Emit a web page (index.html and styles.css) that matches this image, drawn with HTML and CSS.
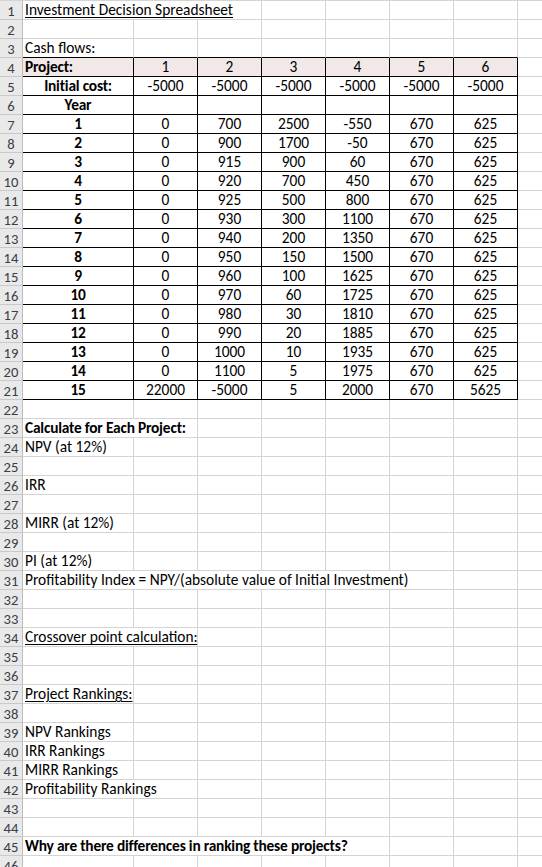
FILE: index.html
```html
<!DOCTYPE html>
<html lang="en">
<head>
<meta charset="utf-8">
<title>Investment Decision Spreadsheet</title>
<link rel="stylesheet" href="styles.css">
</head>
<body>
<div class="sheet">
  <div class="r"><span class="h">1</span><span class="s3 u">Investment Decision Spreadsheet</span><span></span><span></span><span></span><span></span><span></span></div>
  <div class="r"><span class="h">2</span><span></span><span></span><span></span><span></span><span></span><span></span><span></span><span></span></div>
  <div class="r"><span class="h">3</span><span class="tt">Cash flows:</span><span class="tt"></span><span class="tt"></span><span class="tt"></span><span class="tt"></span><span class="tt"></span><span class="tt"></span><span></span></div>
  <div class="r hd"><span class="h">4</span><span class="t b l">Project:</span><span class="t">1</span><span class="t">2</span><span class="t">3</span><span class="t">4</span><span class="t">5</span><span class="t">6</span><span></span></div>
  <div class="r"><span class="h">5</span><span class="t b">Initial cost:</span><span class="t">-5000</span><span class="t">-5000</span><span class="t">-5000</span><span class="t">-5000</span><span class="t">-5000</span><span class="t">-5000</span><span></span></div>
  <div class="r"><span class="h">6</span><span class="t b">Year</span><span class="t"></span><span class="t"></span><span class="t"></span><span class="t"></span><span class="t"></span><span class="t"></span><span></span></div>
  <div class="r"><span class="h">7</span><span class="t b">1</span><span class="t">0</span><span class="t">700</span><span class="t">2500</span><span class="t">-550</span><span class="t">670</span><span class="t">625</span><span></span></div>
  <div class="r"><span class="h">8</span><span class="t b">2</span><span class="t">0</span><span class="t">900</span><span class="t">1700</span><span class="t">-50</span><span class="t">670</span><span class="t">625</span><span></span></div>
  <div class="r"><span class="h">9</span><span class="t b">3</span><span class="t">0</span><span class="t">915</span><span class="t">900</span><span class="t">60</span><span class="t">670</span><span class="t">625</span><span></span></div>
  <div class="r"><span class="h">10</span><span class="t b">4</span><span class="t">0</span><span class="t">920</span><span class="t">700</span><span class="t">450</span><span class="t">670</span><span class="t">625</span><span></span></div>
  <div class="r"><span class="h">11</span><span class="t b">5</span><span class="t">0</span><span class="t">925</span><span class="t">500</span><span class="t">800</span><span class="t">670</span><span class="t">625</span><span></span></div>
  <div class="r"><span class="h">12</span><span class="t b">6</span><span class="t">0</span><span class="t">930</span><span class="t">300</span><span class="t">1100</span><span class="t">670</span><span class="t">625</span><span></span></div>
  <div class="r"><span class="h">13</span><span class="t b">7</span><span class="t">0</span><span class="t">940</span><span class="t">200</span><span class="t">1350</span><span class="t">670</span><span class="t">625</span><span></span></div>
  <div class="r"><span class="h">14</span><span class="t b">8</span><span class="t">0</span><span class="t">950</span><span class="t">150</span><span class="t">1500</span><span class="t">670</span><span class="t">625</span><span></span></div>
  <div class="r"><span class="h">15</span><span class="t b">9</span><span class="t">0</span><span class="t">960</span><span class="t">100</span><span class="t">1625</span><span class="t">670</span><span class="t">625</span><span></span></div>
  <div class="r"><span class="h">16</span><span class="t b">10</span><span class="t">0</span><span class="t">970</span><span class="t">60</span><span class="t">1725</span><span class="t">670</span><span class="t">625</span><span></span></div>
  <div class="r"><span class="h">17</span><span class="t b">11</span><span class="t">0</span><span class="t">980</span><span class="t">30</span><span class="t">1810</span><span class="t">670</span><span class="t">625</span><span></span></div>
  <div class="r"><span class="h">18</span><span class="t b">12</span><span class="t">0</span><span class="t">990</span><span class="t">20</span><span class="t">1885</span><span class="t">670</span><span class="t">625</span><span></span></div>
  <div class="r"><span class="h">19</span><span class="t b">13</span><span class="t">0</span><span class="t">1000</span><span class="t">10</span><span class="t">1935</span><span class="t">670</span><span class="t">625</span><span></span></div>
  <div class="r"><span class="h">20</span><span class="t b">14</span><span class="t">0</span><span class="t">1100</span><span class="t">5</span><span class="t">1975</span><span class="t">670</span><span class="t">625</span><span></span></div>
  <div class="r"><span class="h">21</span><span class="t b">15</span><span class="t">22000</span><span class="t">-5000</span><span class="t">5</span><span class="t">2000</span><span class="t">670</span><span class="t">5625</span><span></span></div>
  <div class="r"><span class="h">22</span><span></span><span></span><span></span><span></span><span></span><span></span><span></span><span></span></div>
  <div class="r"><span class="h">23</span><span class="s2 b">Calculate for Each Project:</span><span></span><span></span><span></span><span></span><span></span><span></span></div>
  <div class="r"><span class="h">24</span><span>NPV (at 12%)</span><span></span><span></span><span></span><span></span><span></span><span></span><span></span></div>
  <div class="r"><span class="h">25</span><span></span><span></span><span></span><span></span><span></span><span></span><span></span><span></span></div>
  <div class="r"><span class="h">26</span><span>IRR</span><span></span><span></span><span></span><span></span><span></span><span></span><span></span></div>
  <div class="r"><span class="h">27</span><span></span><span></span><span></span><span></span><span></span><span></span><span></span><span></span></div>
  <div class="r"><span class="h">28</span><span>MIRR (at 12%)</span><span></span><span></span><span></span><span></span><span></span><span></span><span></span></div>
  <div class="r"><span class="h">29</span><span></span><span></span><span></span><span></span><span></span><span></span><span></span><span></span></div>
  <div class="r"><span class="h">30</span><span>PI (at 12%)</span><span></span><span></span><span></span><span></span><span></span><span></span><span></span></div>
  <div class="r"><span class="h">31</span><span class="s6">Profitability Index = NPY/(absolute value of Initial Investment)</span><span></span><span></span></div>
  <div class="r"><span class="h">32</span><span></span><span></span><span></span><span></span><span></span><span></span><span></span><span></span></div>
  <div class="r"><span class="h">33</span><span></span><span></span><span></span><span></span><span></span><span></span><span></span><span></span></div>
  <div class="r"><span class="h">34</span><span class="s2 u">Crossover point calculation:</span><span></span><span></span><span></span><span></span><span></span><span></span></div>
  <div class="r"><span class="h">35</span><span></span><span></span><span></span><span></span><span></span><span></span><span></span><span></span></div>
  <div class="r"><span class="h">36</span><span></span><span></span><span></span><span></span><span></span><span></span><span></span><span></span></div>
  <div class="r"><span class="h">37</span><span><em class="u">Project Rankings:</em></span><span></span><span></span><span></span><span></span><span></span><span></span><span></span></div>
  <div class="r"><span class="h">38</span><span></span><span></span><span></span><span></span><span></span><span></span><span></span><span></span></div>
  <div class="r"><span class="h">39</span><span>NPV Rankings</span><span></span><span></span><span></span><span></span><span></span><span></span><span></span></div>
  <div class="r"><span class="h">40</span><span>IRR Rankings</span><span></span><span></span><span></span><span></span><span></span><span></span><span></span></div>
  <div class="r"><span class="h">41</span><span>MIRR Rankings</span><span></span><span></span><span></span><span></span><span></span><span></span><span></span></div>
  <div class="r"><span class="h">42</span><span class="s2">Profitability Rankings</span><span></span><span></span><span></span><span></span><span></span><span></span></div>
  <div class="r"><span class="h">43</span><span></span><span></span><span></span><span></span><span></span><span></span><span></span><span></span></div>
  <div class="r"><span class="h">44</span><span></span><span></span><span></span><span></span><span></span><span></span><span></span><span></span></div>
  <div class="r"><span class="h">45</span><span class="s5 b">Why are there differences in ranking these projects?</span><span></span><span></span><span></span></div>
  <div class="r"><span class="h">46</span><span></span><span></span><span></span><span></span><span></span><span></span><span></span><span></span></div>
</div>
</body>
</html>
```

FILE: styles.css
```css
html, body {
  margin: 0;
  padding: 0;
  background: #ffffff;
}
body {
  width: 542px;
  height: 867px;
  overflow: hidden;
  font-family: Calibri, Carlito, Lato, "Noto Sans", sans-serif;
  font-size: 15.4px;
  color: #000000;
}
.sheet {
  border-top: 1px solid #d4d4d4;
}
.r {
  display: grid;
  grid-template-columns: 23px 111px repeat(6, 64px) 40px;
  height: 19px;
}
.r > span {
  box-sizing: border-box;
  height: 19px;
  border-right: 1px solid #d4d4d4;
  border-bottom: 1px solid #d4d4d4;
  padding: 0 2px;
  line-height: 18px;
  white-space: nowrap;
  overflow: hidden;
}
.r > span.h {
  background: #e9e9e9;
  border-right: 1px solid #bdbdbd;
  border-bottom: 1px solid #c9c9c9;
  color: #3c3c46;
  text-align: center;
  padding: 1px 0 0 0;
  font-size: 14.6px;
}
.r > span.tt {
  border-bottom-color: #000000;
}
.r > span.t {
  border-right-color: #000000;
  border-bottom-color: #000000;
  text-align: center;
}
.hd > span.t {
  background: #f2e8e7;
}
.r > span.l {
  text-align: left;
}
.b {
  font-weight: bold;
  letter-spacing: -0.2px;
}
.u {
  text-decoration: underline;
  text-underline-offset: 2px;
}
em {
  font-style: normal;
}
.s2 { grid-column: span 2; }
.s3 { grid-column: span 3; }
.s5 { grid-column: span 5; }
.s6 { grid-column: span 6; }
```
